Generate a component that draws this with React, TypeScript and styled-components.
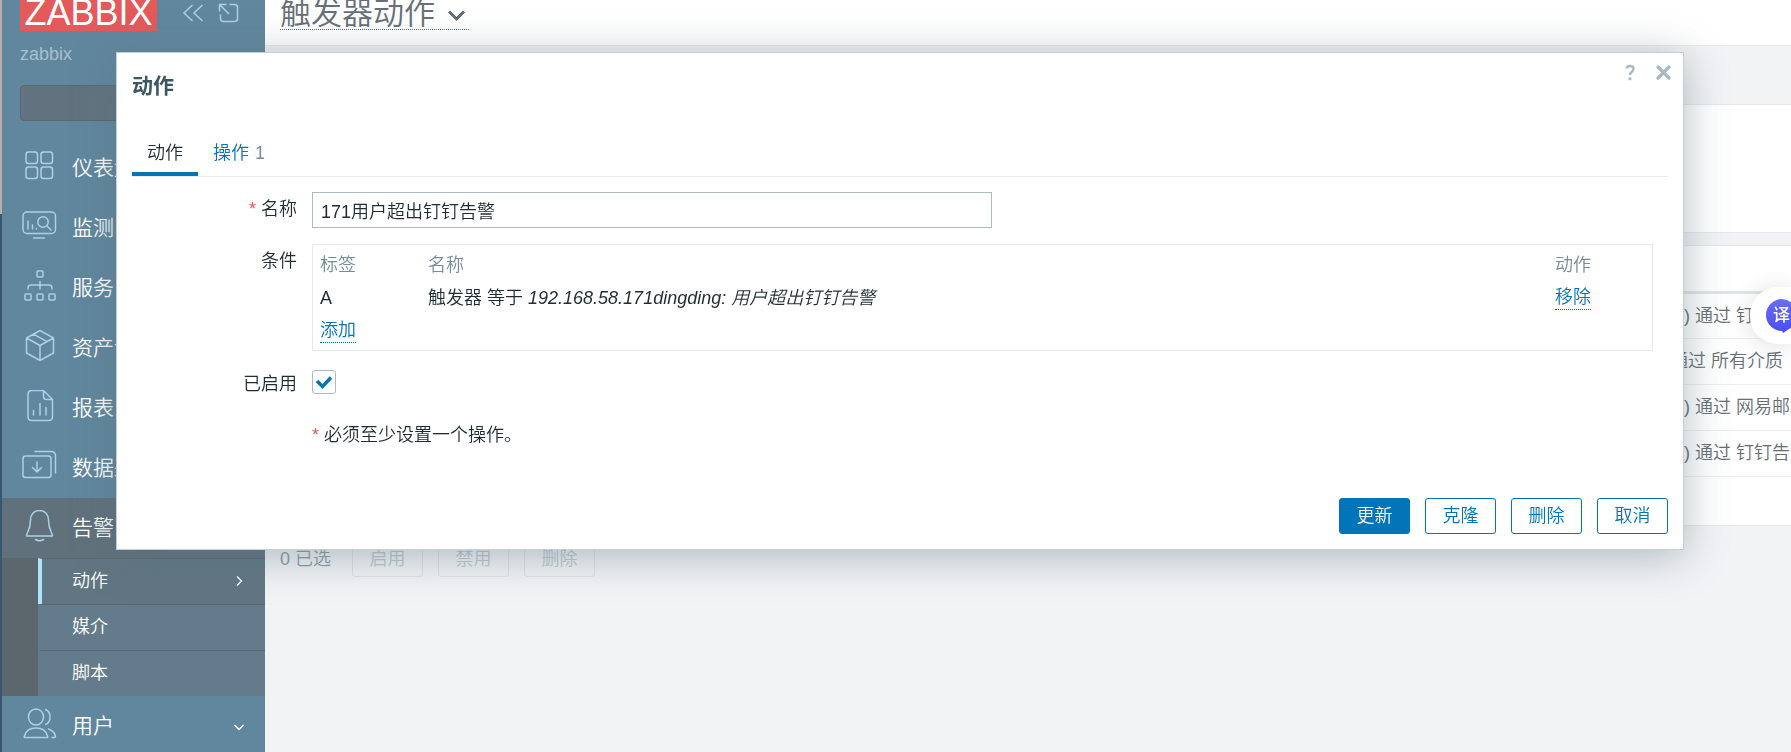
import React from 'react';
import styled, { createGlobalStyle, css } from 'styled-components';

const Global = createGlobalStyle`
  *, *::before, *::after { box-sizing: border-box; }
  body {
    margin: 0;
    overflow: hidden;
    background: #f2f3f5;
    color: #1f2c33;
    font-family: "Liberation Sans", "Noto Sans CJK SC", sans-serif;
    font-size: 18px;
    font-weight: 350;
    line-height: 24px;
  }
  button, input { font: inherit; }
  a { color: inherit; text-decoration: none; }
  h1, h2, ul { margin: 0; padding: 0; }
  ul { list-style: none; }
`;

const Page = styled.div`
  display: flex;
  height: 100vh;
  overflow: hidden;
`;

const WindowEdge = styled.div`
  flex: none;
  width: 2px;
  background: linear-gradient(#b4b0ab 214px, #3a566d 214px);
`;

/* Sidebar */

const Sidebar = styled.aside`
  flex: none;
  width: 263px;
  background: #61879e;
  color: #fff;
`;

const Brand = styled.div`
  display: flex;
  align-items: flex-start;
  padding-left: 18px;
`;

const Logo = styled.a`
  width: 137px;
  height: 31px;
  background: #e45959;
  color: #fff;
  font-size: 36px;
  font-weight: 400;
  line-height: 26px;
  text-align: center;
`;

const BrandButtons = styled.div`
  display: flex;
  gap: 12px;
  padding: 1px 0 0 24px;
`;

const IconButton = styled.button<{ $size: number }>`
  display: flex;
  width: ${(p) => p.$size}px;
  height: ${(p) => p.$size}px;
  padding: 0;
  border: 0;
  background: none;
  color: inherit;
`;

const ServerName = styled.div`
  padding: 11px 18px 19px;
  color: #a5c0d0;
`;

const SearchBox = styled.input`
  display: block;
  width: 227px;
  height: 36px;
  margin: 0 18px 17px;
  padding: 0 9px;
  border: 1px solid #586770;
  border-radius: 4px;
  background: #62737f;
  color: #fff;
`;

const MenuLink = styled.a<{ $active?: boolean }>`
  display: flex;
  align-items: center;
  gap: 15px;
  height: 60px;
  padding: 0 18px 0 19px;
  background: ${(p) => (p.$active ? '#61717c' : 'transparent')};
  font-size: 21px;
  white-space: nowrap;

  > span { flex: 1; }
`;

const SubMenu = styled.ul`
  padding-left: 36px;
  background: #5c666d;
`;

const SubLink = styled.a<{ $active?: boolean }>`
  display: flex;
  align-items: center;
  justify-content: space-between;
  height: 45px;
  padding: 0 18px 2px 30px;
  border-left: 4px solid ${(p) => (p.$active ? '#b0e2fc' : 'transparent')};
  background: ${(p) => (p.$active ? '#617682' : '#637b8a')};

  li + li & { border-top: 1px solid #5a666d; height: 46px; }
`;

/* Page content behind the dialog */

const Main = styled.main`
  flex: 1;
  min-width: 0;
`;

const Header = styled.header`
  height: 46px;
  padding-left: 15px;
  border-bottom: 1px solid #e8ebed;
  background: #fff;

  h1 { display: flex; }
`;

const TitleButton = styled.button`
  display: flex;
  align-items: center;
  gap: 10px;
  height: 30px;
  padding: 0;
  border: 0;
  border-bottom: 1px dotted #5d6a72;
  background: none;
  color: #677078;
  font-size: 31px;
  font-weight: 350;
  line-height: 16px;

  > span { height: 18px; }
`;

const Panel = styled.section<{ $height: number; $top: number }>`
  height: ${(p) => p.$height}px;
  margin: ${(p) => p.$top}px 0 0 15px;
  border: 1px solid #e4e8eb;
  border-right: 0;
  background: #fff;
  overflow: hidden;
`;

const ListTable = styled.table`
  width: 100%;
  table-layout: fixed;
  border-collapse: collapse;
  color: #666f76;
  white-space: nowrap;

  th { height: 46px; border-bottom: 3px solid #dfe5e8; }
  td { height: 46px; padding: 0; border-bottom: 1px solid #edeff1; }
  th:last-child { width: 121px; }
`;

const OperationText = styled.span<{ $indent: boolean }>`
  padding-left: ${(p) => (p.$indent ? 14 : 0)}px;
`;

const SelectionBar = styled.div`
  display: flex;
  align-items: center;
  gap: 15px;
  padding: 15px 15px 0;
  color: #8b9ca5;

  > span { margin-right: 6px; }
`;

/* Buttons */

const Button = styled.button<{ $kind?: 'primary' | 'muted' }>`
  min-width: 71px;
  height: 36px;
  padding: 0 16px;
  border: 1px solid #0275b8;
  border-radius: 3px;
  background: #fff;
  color: #0275b8;
  line-height: 32px;

  ${(p) => p.$kind === 'primary' && css`
    background: #0275b8;
    color: #fff;
  `}
  ${(p) => p.$kind === 'muted' && css`
    border-color: #dde1e4;
    background: none;
    color: #bcc8ce;
  `}
`;

/* Dialog */

const Dialog = styled.div`
  position: fixed;
  top: 52px;
  left: 116px;
  right: 107px;
  display: flex;
  flex-direction: column;
  padding: 0 15px 15px;
  border: 1px solid #c5d1d8;
  background: #fff;
  box-shadow: 0 6px 40px rgba(84, 110, 122, 0.45);
`;

const DialogHeader = styled.div`
  display: flex;
  justify-content: space-between;
  align-items: flex-start;
  height: 74px;
  color: #a9b9c1;

  h2 {
    padding-top: 21px;
    color: #3c5563;
    font-size: 21px;
    font-weight: 700;
  }
`;

const DialogTools = styled.div`
  display: flex;
  gap: 10px;
  padding: 8px 0 0;
  margin-right: -8px;
`;

const Tabs = styled.div`
  display: flex;
  border-bottom: 1px solid #e6ebee;
`;

const Tab = styled.button<{ $active?: boolean }>`
  height: 49px;
  padding: 6px 15px 0;
  border: 0;
  border-bottom: 4px solid ${(p) => (p.$active ? '#0275b8' : 'transparent')};
  background: none;
  color: ${(p) => (p.$active ? '#1f2c33' : '#0275b8')};

  small {
    margin-left: 6px;
    color: #768d99;
    font-size: 18px;
  }
`;

const Form = styled.div`
  display: grid;
  grid-template-columns: 165px minmax(0, 1fr);
  column-gap: 15px;
  row-gap: 16px;
  padding: 15px 15px 51px 0;
`;

const Label = styled.label`
  padding-top: 5px;
  text-align: right;
`;

const Required = styled.span`
  margin-right: 5px;
  color: #e45959;
`;

const TextInput = styled.input`
  width: 680px;
  max-width: 100%;
  height: 36px;
  padding: 0 8px;
  border: 1px solid #acbbc2;
  background: #fff;
  color: #1f2c33;
`;

const ConditionBox = styled.div`
  padding: 3px 7px;
  border: 1px solid #e4e9ec;
`;

const ConditionTable = styled.table`
  width: 100%;
  table-layout: fixed;
  border-collapse: collapse;
  text-align: left;

  th, td { height: 33px; padding: 0; }
  th { color: #768d99; font-weight: 350; }
  th:first-child { width: 108px; }
  th:last-child { width: 90px; }
`;

const ActionLink = styled.a`
  display: inline-block;
  border-bottom: 1px dotted #0275b8;
  color: #0275b8;
  line-height: 24px;
`;

const CheckWrap = styled.span`
  display: grid;
  width: 24px;
  height: 24px;
  margin-top: 3px;

  > * { grid-area: 1 / 1; }
  svg { pointer-events: none; }
`;

const CheckInput = styled.input`
  appearance: none;
  width: 24px;
  height: 24px;
  margin: 0;
  border: 1px solid #acbbc2;
  border-radius: 3px;
  background: #fff;
`;

const Note = styled.div`
  grid-column: 2;
  padding-top: 11px;
`;

const DialogFooter = styled.div`
  display: flex;
  justify-content: flex-end;
  gap: 15px;
`;

/* Floating translate handle */

const Translate = styled.button`
  position: fixed;
  top: 287px;
  right: 0;
  width: 41px;
  height: 57px;
  padding: 0;
  border: 0;
  border-radius: 28px 0 0 28px;
  background: #fff;
  box-shadow: 0 2px 24px rgba(0, 0, 0, 0.14);
  overflow: visible;

  svg { display: block; }
`;

const MenuIcon = ({ children }: { children: React.ReactNode }) => (
  <svg width="36" height="36" viewBox="0 1 36 36" fill="none" stroke="#acd0e4" strokeWidth="1.5" strokeLinecap="round" strokeLinejoin="round" aria-hidden="true">
    {children}
  </svg>
);

const menu = [
  {
    label: '仪表盘',
    icon: (
      <>
        <rect x="5" y="3" width="11.5" height="11.5" rx="2.5" />
        <rect x="20" y="3" width="11.5" height="11.5" rx="2.5" />
        <rect x="5" y="18" width="11.5" height="11.5" rx="2.5" />
        <rect x="20" y="18" width="11.5" height="11.5" rx="2.5" />
      </>
    ),
  },
  {
    label: '监测',
    icon: (
      <>
        <rect x="2" y="3" width="32.5" height="21.5" rx="4" />
        <circle cx="22" cy="13" r="5.2" />
        <path d="M26 17l4 4M7 12v8M11.500 16v4M15.500 19.500v.5M12.500 29h11" />
      </>
    ),
  },
  {
    label: '服务',
    icon: (
      <>
        <rect x="16" y="2" width="6" height="6" rx="1" />
        <path d="M19 12.500v7.500M7 20v-1q0-3 3-3h18q3 0 3 3v1" />
        <rect x="4" y="25" width="6" height="6" rx="1" />
        <rect x="16" y="25" width="6" height="6" rx="1" />
        <rect x="28" y="25" width="6" height="6" rx="1" />
      </>
    ),
  },
  {
    label: '资产记录',
    icon: <path d="M19 1.500l13.500 7.500v15L19 31.500 5.500 24V9zM5.500 9L19 16.500 32.500 9M19 16.500v15M12.500 5.200L26 12.600" />,
  },
  {
    label: '报表',
    icon: <path d="M22.500 1.500H11q-4 0-4 4v22q0 4 4 4h16.500q4 0 4-4V10.500zM22.500 1.500v6q0 3 3 3h6M12.500 21.500v4.500M19 14.500V26M25 18.500V26" />,
  },
  {
    label: '数据采集',
    icon: (
      <>
        <rect x="2" y="7" width="28" height="21.500" rx="2.5" />
        <path d="M14 2.500h16q4.500 0 4.500 4.500v17M16 13v9.500M11.500 18.500l4.500 4.500 4.500-4.500" />
      </>
    ),
  },
];

const subMenu = ['动作', '媒介', '脚本'];

const operations = [') 通过 钉钉告警', '通过 所有介质', ') 通过 网易邮箱', ') 通过 钉钉告警'];

export default function App() {
  return (
    <>
      <Global />
      <Page>
        <WindowEdge />
        <Sidebar>
          <Brand>
            <Logo href="#">ZABBIX</Logo>
            <BrandButtons>
              <IconButton $size={24} aria-label="收起">
                <svg width="24" height="24" viewBox="0 0 24 24" fill="none" stroke="#acd0e4" strokeWidth="1.5">
                  <path d="M11.500 4L3 12l8.500 8M21.500 4L13 12l8.500 8" />
                </svg>
              </IconButton>
              <IconButton $size={24} aria-label="隐藏">
                <svg width="24" height="24" viewBox="0 0 24 24" fill="none" stroke="#acd0e4" strokeWidth="1.500">
                  <path d="M2.500 10.500V3.500h7M3 4l9 9M12.500 3.500h5q3 0 3 3v11q0 3-3 3h-11q-3 0-3-3v-4" />
                </svg>
              </IconButton>
            </BrandButtons>
          </Brand>
          <ServerName>zabbix</ServerName>
          <SearchBox type="text" aria-label="搜索" />
          <nav>
            <ul>
              {menu.map((m) => (
                <li key={m.label}>
                  <MenuLink href="#">
                    <MenuIcon>{m.icon}</MenuIcon>
                    <span>{m.label}</span>
                  </MenuLink>
                </li>
              ))}
              <li>
                <MenuLink href="#" $active>
                  <MenuIcon>
                    <path d="M18.500 1.500c-5.500 0-9 4-9 9.500 0 8-1.500 9.500-4 15q-.3 1 .7 1h24.600q1 0 .7-1c-2.500-5.500-4-7-4-15 0-5.500-3.500-9.500-9-9.500zM14.500 30.500q4 2.500 8 0" />
                  </MenuIcon>
                  <span>告警</span>
                </MenuLink>
                <SubMenu>
                  {subMenu.map((s, i) => (
                    <li key={s}>
                      <SubLink href="#" $active={i === 0}>
                        {s}
                        {i === 0 && (
                          <svg width="16" height="16" viewBox="0 0 16 16" fill="none" stroke="#fff" strokeWidth="1.3">
                            <path d="M6 3.500L10.500 8 6 12.500" />
                          </svg>
                        )}
                      </SubLink>
                    </li>
                  ))}
                </SubMenu>
              </li>
              <li>
                <MenuLink href="#">
                  <MenuIcon>
                    <ellipse cx="15" cy="10" rx="7.500" ry="8" />
                    <path d="M3.500 30.500q-.5 0-.3-1C4.500 24 9 21 15 21s10.500 3 11.700 8.500q.2 1-.3 1zM24.500 2.500c6 2.500 6 12.500 0 15M27.500 22c4 1.500 6.500 4 7 7.500q0 1-.7 1H31" />
                  </MenuIcon>
                  <span>用户</span>
                  <svg width="16" height="16" viewBox="0 0 16 16" fill="none" stroke="#fff" strokeWidth="1.3">
                    <path d="M3.500 7L8 11.500 12.500 7" />
                  </svg>
                </MenuLink>
              </li>
            </ul>
          </nav>
        </Sidebar>

        <Main>
          <Header>
            <h1>
              <TitleButton>
                <span>触发器动作</span>
                <svg width="24" height="24" viewBox="0 0 24 24" fill="none" stroke="#5d6a72" strokeWidth="3">
                  <path d="M4 8.500l7.500 7.500L19 8.500" />
                </svg>
              </TitleButton>
            </h1>
          </Header>
          <Panel $top={58} $height={129} />
          <Panel $top={12} $height={281}>
            <ListTable>
              <thead>
                <tr>
                  <th />
                  <th />
                </tr>
              </thead>
              <tbody>
                {operations.map((text, i) => (
                  <tr key={i}>
                    <td />
                    <td>
                      <OperationText $indent={text.startsWith(')')}>{text}</OperationText>
                    </td>
                  </tr>
                ))}
              </tbody>
            </ListTable>
          </Panel>
          <SelectionBar>
            <span>0 已选</span>
            <Button $kind="muted">启用</Button>
            <Button $kind="muted">禁用</Button>
            <Button $kind="muted">删除</Button>
          </SelectionBar>
        </Main>
      </Page>

      <Dialog role="dialog" aria-labelledby="dialog-title">
        <DialogHeader>
          <h2 id="dialog-title">动作</h2>
          <DialogTools>
            <IconButton $size={24} aria-label="帮助">
              <svg width="24" height="24" viewBox="0 0 24 24" fill="none" stroke="currentColor" strokeWidth="2.4">
                <path d="M8.500 7.500q.6-2.500 3.600-2.500 3.400 0 3.400 3c0 2.800-3.500 2.700-3.500 6" />
                <path d="M12 16.500v2.700" strokeWidth="2.900" />
              </svg>
            </IconButton>
            <IconButton $size={24} aria-label="关闭">
              <svg width="24" height="24" viewBox="0 0 24 24" fill="none" stroke="currentColor" strokeWidth="3.2" strokeLinecap="round">
                <path d="M6 6l11 11M17 6L6 17" />
              </svg>
            </IconButton>
          </DialogTools>
        </DialogHeader>

        <Tabs role="tablist">
          <Tab role="tab" aria-selected="true" $active>动作</Tab>
          <Tab role="tab" aria-selected="false">
            操作<small>1</small>
          </Tab>
        </Tabs>

        <Form>
          <Label htmlFor="action-name">
            <Required>*</Required>名称
          </Label>
          <TextInput id="action-name" type="text" defaultValue="171用户超出钉钉告警" />

          <Label as="span">条件</Label>
          <ConditionBox>
            <ConditionTable>
              <thead>
                <tr>
                  <th>标签</th>
                  <th>名称</th>
                  <th>动作</th>
                </tr>
              </thead>
              <tbody>
                <tr>
                  <td>A</td>
                  <td>
                    触发器 等于 <em>192.168.58.171dingding: 用户超出钉钉告警</em>
                  </td>
                  <td>
                    <ActionLink href="#">移除</ActionLink>
                  </td>
                </tr>
                <tr>
                  <td colSpan={3}>
                    <ActionLink href="#">添加</ActionLink>
                  </td>
                </tr>
              </tbody>
            </ConditionTable>
          </ConditionBox>

          <Label htmlFor="action-enabled">已启用</Label>
          <CheckWrap>
            <CheckInput id="action-enabled" type="checkbox" defaultChecked />
            <svg width="24" height="24" viewBox="0 0 24 24" fill="none" stroke="#0275b8" strokeWidth="3.4">
              <path d="M5 11l5.500 5.500L19 7.500" />
            </svg>
          </CheckWrap>

          <Note>
            <Required>*</Required>必须至少设置一个操作。
          </Note>
        </Form>

        <DialogFooter>
          <Button $kind="primary">更新</Button>
          <Button>克隆</Button>
          <Button>删除</Button>
          <Button>取消</Button>
        </DialogFooter>
      </Dialog>

      <Translate aria-label="翻译">
        <svg width="41" height="57" viewBox="0 0 41 57" fontFamily="Noto Sans CJK SC, sans-serif">
          <defs>
            <linearGradient id="bubble" x1="0" y1="0" x2="0" y2="1">
              <stop offset="0" stopColor="#6b6cf6" />
              <stop offset="1" stopColor="#4a4df2" />
            </linearGradient>
          </defs>
          <path d="M32 12a16 16 0 1 0 0 32l1 2 6-4a16 16 0 0 0-7-30z" fill="url(#bubble)" />
          <text x="23" y="34" fontSize="17" fontWeight="500" fill="#fff">译</text>
        </svg>
      </Translate>
    </>
  );
}
